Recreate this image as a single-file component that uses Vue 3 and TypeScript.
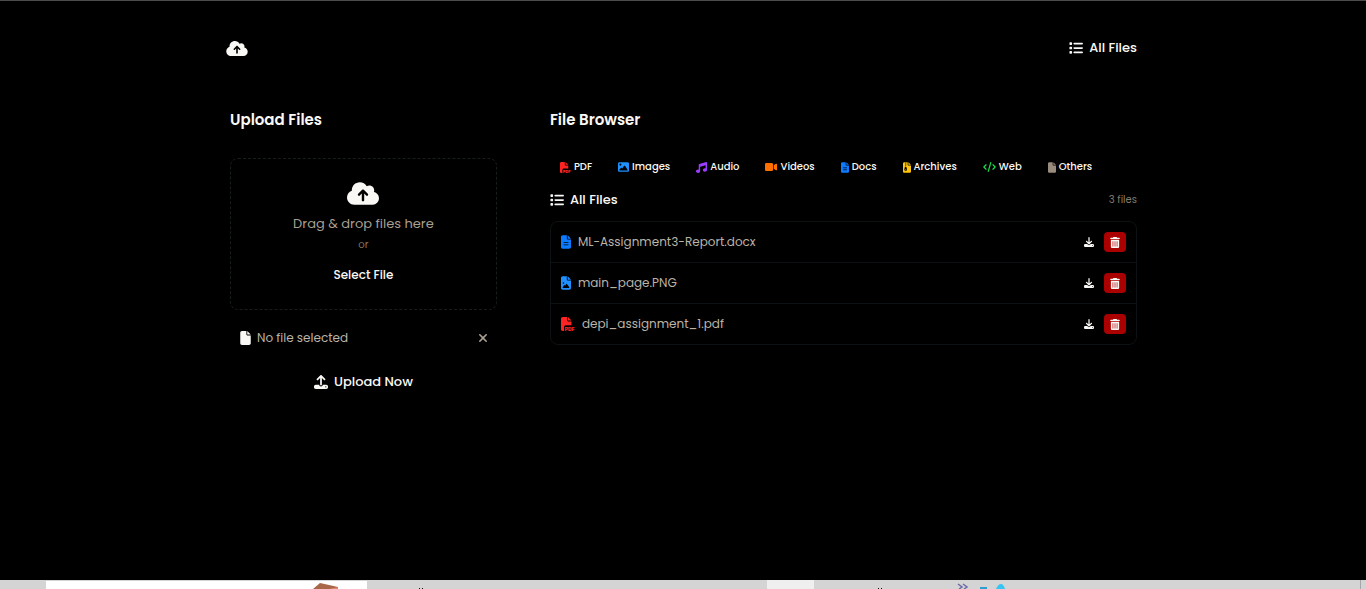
<script setup lang="ts">
import { ref } from 'vue'

type IconName =
  | 'cloud' | 'list' | 'file' | 'doc' | 'picture' | 'pdf' | 'image' | 'music'
  | 'video' | 'zip' | 'code' | 'upload' | 'download' | 'trash' | 'close'

interface Glyph { box: string; d: string; label?: string }

const page = 'M0 64C0 28.7 28.7 0 64 0H224V128c0 17.7 14.3 32 32 32H384V448c0 35.3-28.7 64-64 64H64c-35.3 0-64-28.7-64-64V64zm384 64H256V0L384 128z'

const glyphs: Record<IconName, Glyph> = {
  cloud: { box: '0 32 640 448', d: 'M144 480C64.5 480 0 415.5 0 336c0-62.8 40.2-116.2 96.2-135.9c-.1-2.7-.2-5.4-.2-8.1c0-88.4 71.6-160 160-160c59.3 0 111 32.2 138.7 80.2C409.9 102 428.3 96 448 96c53 0 96 43 96 96c0 12.2-2.3 23.8-6.4 34.6C596 238.4 640 290.1 640 352c0 70.7-57.3 128-128 128H144zm79-217c-9.4 9.4-9.4 24.6 0 33.9s24.6 9.4 33.9 0l39-39V392c0 13.3 10.7 24 24 24s24-10.7 24-24V257.9l39 39c9.4 9.4 24.6 9.4 33.9 0s9.4-24.6 0-33.9l-80-80c-9.4-9.4-24.6-9.4-33.9 0l-80 80z' },
  list: { box: '0 0 512 512', d: 'M40 48C26.7 48 16 58.7 16 72v48c0 13.3 10.7 24 24 24H88c13.3 0 24-10.7 24-24V72c0-13.3-10.7-24-24-24H40zM192 64c-17.7 0-32 14.3-32 32s14.3 32 32 32H480c17.7 0 32-14.3 32-32s-14.3-32-32-32H192zm0 160c-17.7 0-32 14.3-32 32s14.3 32 32 32H480c17.7 0 32-14.3 32-32s-14.3-32-32-32H192zm0 160c-17.7 0-32 14.3-32 32s14.3 32 32 32H480c17.7 0 32-14.3 32-32s-14.3-32-32-32H192zM16 232v48c0 13.3 10.7 24 24 24H88c13.3 0 24-10.7 24-24V232c0-13.3-10.7-24-24-24H40c-13.3 0-24 10.7-24 24zM40 368c-13.3 0-24 10.7-24 24v48c0 13.3 10.7 24 24 24H88c13.3 0 24-10.7 24-24V392c0-13.3-10.7-24-24-24H40z' },
  file: { box: '0 0 384 512', d: page },
  doc: { box: '0 0 384 512', d: page + 'M112 256H272c8.8 0 16 7.2 16 16s-7.2 16-16 16H112c-8.8 0-16-7.2-16-16s7.2-16 16-16zM112 352H272c8.8 0 16 7.2 16 16s-7.2 16-16 16H112c-8.8 0-16-7.2-16-16s7.2-16 16-16z' },
  picture: { box: '0 0 384 512', d: page + 'M64 256a32 32 0 1 1 64 0 32 32 0 1 1-64 0zm152 32c5.3 0 10.2 2.6 13.2 6.9l88 128c3.4 4.9 3.7 11.3 1 16.5s-8.2 8.6-14.2 8.6H80c-5.8 0-11.1-3.1-13.9-8.1s-2.8-11.2.2-16.1l48-80c2.9-4.8 8.1-7.8 13.7-7.8s10.8 2.9 13.7 7.8l12.8 21.4 48.3-70.2c3-4.3 7.9-6.9 13.2-6.9z' },
  pdf: { box: '0 0 512 512', d: 'M0 64C0 28.7 28.7 0 64 0H224V128c0 17.7 14.3 32 32 32H384V304H176c-35.3 0-64 28.7-64 64V512H64c-35.3 0-64-28.7-64-64V64zm384 64H256V0L384 128z', label: 'PDF' },
  image: { box: '0 32 512 448', d: 'M0 96C0 60.7 28.7 32 64 32H448c35.3 0 64 28.7 64 64V416c0 35.3-28.7 64-64 64H64c-35.3 0-64-28.7-64-64V96zM323.8 202.5c-4.5-6.6-11.9-10.5-19.8-10.5s-15.4 3.9-19.8 10.5l-87 127.6L170.7 297c-4.6-5.7-11.5-9-18.7-9s-14.2 3.3-18.7 9l-64 80c-5.8 7.2-6.9 17.1-2.9 25.4s12.4 13.6 21.6 13.6H424c8.9 0 17.1-4.9 21.2-12.8s3.6-17.4-1.4-24.7l-120-176zM112 192a48 48 0 1 0 0-96 48 48 0 1 0 0 96z' },
  music: { box: '0 0 512 512', d: 'M499.1 6.3c8.1 6 12.9 15.6 12.9 25.7v72V368c0 44.2-43 80-96 80s-96-35.8-96-80s43-80 96-80c11.2 0 22 1.6 32 4.6V147L192 223.8V432c0 44.2-43 80-96 80s-96-35.8-96-80s43-80 96-80c11.2 0 22 1.6 32 4.6V200 128c0-14.1 9.3-26.6 22.8-30.7l320-96c9.7-2.9 20.2-1.1 28.3 5z' },
  video: { box: '0 64 576 384', d: 'M0 128C0 92.7 28.7 64 64 64H320c35.3 0 64 28.7 64 64V384c0 35.3-28.7 64-64 64H64c-35.3 0-64-28.7-64-64V128zM559.1 99.8c10.4 5.6 16.9 16.4 16.9 28.2V384c0 11.8-6.5 22.6-16.9 28.2s-23 5-32.9-1.6l-96-64L416 337.1V174.9l14.2-9.5 96-64c9.8-6.5 22.4-7.2 32.9-1.6z' },
  zip: { box: '0 0 384 512', d: page + 'M96 48c0-8.8 7.2-16 16-16h32c8.8 0 16 7.2 16 16s-7.2 16-16 16H112c-8.8 0-16-7.2-16-16zm0 64c0-8.8 7.2-16 16-16h32c8.8 0 16 7.2 16 16s-7.2 16-16 16H112c-8.8 0-16-7.2-16-16zm0 64c0-8.8 7.2-16 16-16h32c8.8 0 16 7.2 16 16s-7.2 16-16 16H112c-8.8 0-16-7.2-16-16zm-6.3 71.8c3.7-14 16.4-23.8 30.9-23.8h14.8c14.5 0 27.2 9.7 30.9 23.8l23.5 88.2c1.4 5.4 2.1 10.9 2.1 16.4c0 35.2-28.8 63.7-64 63.7s-64-28.5-64-63.7c0-5.5 .7-11.1 2.1-16.4l23.5-88.2zM112 336c-8.8 0-16 7.2-16 16s7.2 16 16 16h32c8.8 0 16-7.2 16-16s-7.2-16-16-16H112z' },
  code: { box: '0 0 640 512', d: 'M392.8 1.2c-17-4.9-34.7 5-39.6 22l-128 448c-4.9 17 5 34.7 22 39.6s34.7-5 39.6-22l128-448c4.9-17-5-34.7-22-39.6zm80.6 120.1c-12.5 12.5-12.5 32.8 0 45.3L562.7 256l-89.4 89.4c-12.5 12.5-12.5 32.8 0 45.3s32.8 12.5 45.3 0l112-112c12.5-12.5 12.5-32.8 0-45.3l-112-112c-12.5-12.5-32.8-12.5-45.3 0zm-306.7 0c-12.5-12.5-32.8-12.5-45.3 0l-112 112c-12.5 12.5-12.5 32.8 0 45.3l112 112c12.5 12.5 32.8 12.5 45.3 0s12.5-32.8 0-45.3L77.3 256l89.4-89.4c12.5-12.5 12.5-32.8 0-45.3z' },
  upload: { box: '0 0 512 512', d: 'M288 109.3V352c0 17.7-14.3 32-32 32s-32-14.3-32-32V109.3l-73.4 73.4c-12.5 12.5-32.8 12.5-45.3 0s-12.5-32.8 0-45.3l128-128c12.5-12.5 32.8-12.5 45.3 0l128 128c12.5 12.5 12.5 32.8 0 45.3s-32.8 12.5-45.3 0L288 109.3zM64 352H192c0 35.3 28.7 64 64 64s64-28.7 64-64H448c35.3 0 64 28.7 64 64v32c0 35.3-28.7 64-64 64H64c-35.3 0-64-28.7-64-64V416c0-35.3 28.7-64 64-64zM432 456a24 24 0 1 0 0-48 24 24 0 1 0 0 48z' },
  download: { box: '0 0 512 512', d: 'M288 32c0-17.7-14.3-32-32-32s-32 14.3-32 32V274.7l-73.4-73.4c-12.5-12.5-32.8-12.5-45.3 0s-12.5 32.8 0 45.3l128 128c12.5 12.5 32.8 12.5 45.3 0l128-128c12.5-12.5 12.5-32.8 0-45.3s-32.8-12.5-45.3 0L288 274.7V32zM64 352c-35.3 0-64 28.7-64 64v32c0 35.3 28.7 64 64 64H448c35.3 0 64-28.7 64-64V416c0-35.3-28.7-64-64-64H346.5l-45.3 45.3c-25 25-65.5 25-90.5 0L165.5 352H64zm368 56a24 24 0 1 1 0 48 24 24 0 1 1 0-48z' },
  trash: { box: '0 0 448 512', d: 'M135.2 17.7L128 32H32C14.3 32 0 46.3 0 64S14.3 96 32 96H416c17.7 0 32-14.3 32-32s-14.3-32-32-32H320l-7.2-14.3C307.4 6.8 296.3 0 284.2 0H163.8c-12.1 0-23.2 6.8-28.6 17.7zM416 128H32V448c0 35.3 28.7 64 64 64H352c35.3 0 64-28.7 64-64V128zM144 208V432c0 8.8-7.2 16-16 16s-16-7.2-16-16V208c0-8.8 7.2-16 16-16s16 7.2 16 16zm96 0V432c0 8.8-7.2 16-16 16s-16-7.2-16-16V208c0-8.8 7.2-16 16-16s16 7.2 16 16zm96 0V432c0 8.8-7.2 16-16 16s-16-7.2-16-16V208c0-8.8 7.2-16 16-16s16 7.2 16 16z' },
  close: { box: '32 96 320 320', d: 'M342.6 150.6c12.5-12.5 12.5-32.8 0-45.3s-32.8-12.5-45.3 0L192 210.7 86.6 105.4c-12.5-12.5-32.8-12.5-45.3 0s-12.5 32.8 0 45.3L146.7 256 41.4 361.4c-12.5 12.5-12.5 32.8 0 45.3s32.8 12.5 45.3 0L192 301.3 297.4 406.6c12.5 12.5 32.8 12.5 45.3 0s12.5-32.8 0-45.3L237.3 256 342.6 150.6z' },
}

const categories: { name: string; icon: IconName; tone: string }[] = [
  { name: 'PDF', icon: 'pdf', tone: 'red' },
  { name: 'Images', icon: 'image', tone: 'sky' },
  { name: 'Audio', icon: 'music', tone: 'purple' },
  { name: 'Videos', icon: 'video', tone: 'orange' },
  { name: 'Docs', icon: 'doc', tone: 'blue' },
  { name: 'Archives', icon: 'zip', tone: 'yellow' },
  { name: 'Web', icon: 'code', tone: 'green' },
  { name: 'Others', icon: 'file', tone: 'taupe' },
]

const files = ref<{ name: string; icon: IconName; tone: string }[]>([
  { name: 'ML-Assignment3-Report.docx', icon: 'doc', tone: 'blue' },
  { name: 'main_page.PNG', icon: 'picture', tone: 'sky' },
  { name: 'depi_assignment_1.pdf', icon: 'pdf', tone: 'red' },
])

function remove(index: number) {
  files.value.splice(index, 1)
}
</script>

<template>
  <div class="screen">
    <div class="shell">
      <header class="top">
        <a class="brand" href="#" aria-label="Home">
          <svg class="logo" :viewBox="glyphs.cloud.box" aria-hidden="true"><path :d="glyphs.cloud.d" /></svg>
        </a>
        <a class="all-link" href="#files">
          <svg class="icon-md" :viewBox="glyphs.list.box" aria-hidden="true"><path :d="glyphs.list.d" /></svg>
          <span>All Files</span>
        </a>
      </header>

      <main class="columns">
        <section class="upload">
          <h2>Upload Files</h2>
          <div class="dropzone">
            <svg class="drop-cloud" :viewBox="glyphs.cloud.box" aria-hidden="true"><path :d="glyphs.cloud.d" /></svg>
            <p class="drop-text">Drag &amp; drop files here</p>
            <p class="or">or</p>
            <button class="select" type="button">Select File</button>
          </div>
          <div class="chosen">
            <svg class="icon-file" :viewBox="glyphs.file.box" aria-hidden="true"><path :d="glyphs.file.d" /></svg>
            <span class="chosen-name">No file selected</span>
            <button class="clear" type="button" aria-label="Clear selection">
              <svg :viewBox="glyphs.close.box" aria-hidden="true"><path :d="glyphs.close.d" /></svg>
            </button>
          </div>
          <button class="submit" type="button">
            <svg class="icon-md" :viewBox="glyphs.upload.box" aria-hidden="true"><path :d="glyphs.upload.d" fill-rule="evenodd" /></svg>
            <span>Upload Now</span>
          </button>
        </section>

        <section id="files" class="browser">
          <h2>File Browser</h2>
          <nav class="tabs">
            <button v-for="c in categories" :key="c.name" class="tab" type="button">
              <svg :class="['tab-icon', c.icon, c.tone]" :viewBox="glyphs[c.icon].box" aria-hidden="true">
                <path :d="glyphs[c.icon].d" fill-rule="evenodd" />
                <text v-if="glyphs[c.icon].label" class="tag" x="140" y="510">{{ glyphs[c.icon].label }}</text>
              </svg>
              <span>{{ c.name }}</span>
            </button>
          </nav>
          <div class="list-head">
            <h3>
              <svg class="icon-md" :viewBox="glyphs.list.box" aria-hidden="true"><path :d="glyphs.list.d" /></svg>
              <span>All Files</span>
            </h3>
            <span class="count">{{ files.length }} files</span>
          </div>
          <ul class="files">
            <li v-for="(f, i) in files" :key="f.name">
              <svg :class="['row-icon', f.icon, f.tone]" :viewBox="glyphs[f.icon].box" aria-hidden="true">
                <path :d="glyphs[f.icon].d" fill-rule="evenodd" />
                <text v-if="glyphs[f.icon].label" class="tag" x="140" y="510">{{ glyphs[f.icon].label }}</text>
              </svg>
              <span class="file-name">{{ f.name }}</span>
              <button class="action" type="button" :aria-label="'Download ' + f.name">
                <svg class="download" :viewBox="glyphs.download.box" aria-hidden="true"><path :d="glyphs.download.d" fill-rule="evenodd" /></svg>
              </button>
              <button class="action danger" type="button" :aria-label="'Delete ' + f.name" @click="remove(i)">
                <svg class="trash" :viewBox="glyphs.trash.box" aria-hidden="true"><path :d="glyphs.trash.d" fill-rule="evenodd" /></svg>
              </button>
            </li>
          </ul>
        </section>
      </main>
    </div>

    <svg class="taskbar" viewBox="0 0 1366 9" preserveAspectRatio="none" aria-hidden="true">
      <rect width="1366" height="9" fill="#d4d4d4" />
      <rect x="46" y="1" width="321" height="8" fill="#fff" />
      <path d="M313 9L320 3L338 7V9Z" fill="#a9674a" />
      <path d="M329 9L338 7V9Z" fill="#d98a63" />
      <path d="M419 8h1v1h-1zM422 8h1v1h-1zM878 8h1v1h-1zM881 8h1v1h-1z" fill="#111" />
      <rect x="767" width="47" height="9" fill="#efefef" />
      <path d="M958 4l4 3-3 2M963 4l4 3-3 2" fill="none" stroke="#6c6ca8" stroke-width="1.5" />
      <path d="M980 7h7v2h-7z" fill="#2f9fd0" />
      <path d="M996 9C997 6 999 4 1001 4S1004 6 1005 9Z" fill="#35c5f4" />
      <path d="M1360 0h1v9h-1z" fill="#a6a6a6" />
    </svg>
  </div>
</template>

<style>
body {
  margin: 0;
  background: #000;
}
</style>

<style scoped>
.screen {
  box-sizing: border-box;
  min-height: 100vh;
  display: flex;
  flex-direction: column;
  border-top: 1px solid #4c4c4c;
  background: #000;
  color: #faf8f5;
  font-family: Poppins, Inter, "Open Sans", sans-serif;
  font-size: 13px;
  line-height: 22px;
}

.shell {
  box-sizing: border-box;
  width: 100%;
  max-width: 914px;
  margin: 0 auto;
  flex: 1;
}

h2, h3, p, ul {
  margin: 0;
  padding: 0;
}

svg {
  display: block;
  flex: none;
  fill: currentColor;
}

button {
  margin: 0;
  padding: 0;
  border: 0;
  background: none;
  color: inherit;
  font: inherit;
  cursor: pointer;
}

a {
  color: inherit;
  text-decoration: none;
}

.top {
  display: flex;
  align-items: center;
  justify-content: space-between;
  padding: 36px 3px 0 0;
}

.logo {
  width: 22px;
  height: 15px;
}

.all-link, .submit, h3 {
  display: flex;
  align-items: center;
  gap: 6px;
  font-weight: 500;
}

.icon-md {
  width: 14px;
  height: 14px;
}

.columns {
  display: grid;
  grid-template-columns: 5fr 11fr;
  gap: 53px;
  padding: 49px 3px 0 4px;
}

h2 {
  font-size: 15px;
  line-height: 24px;
  font-weight: 600;
}

.upload {
  display: flex;
  flex-direction: column;
}

.dropzone {
  display: flex;
  flex-direction: column;
  align-items: center;
  margin-top: 26px;
  padding: 23px 16px;
  border: 1px dashed #171c1d;
  border-radius: 8px;
}

.drop-cloud {
  width: 32px;
  height: 23px;
}

.drop-text {
  margin-top: 8px;
  color: #a89f91;
}

.or {
  margin-top: 2px;
  color: #857660;
  font-size: 10px;
  line-height: 16px;
}

.select {
  margin-top: 11px;
  font-size: 12px;
  font-weight: 500;
}

.chosen {
  display: flex;
  align-items: center;
  gap: 6px;
  margin-top: 17px;
  padding: 0 10px;
  color: #bbb3a8;
  font-size: 12px;
}

.icon-file {
  width: 11px;
  height: 14px;
  color: #faf8f5;
}

.chosen-name {
  flex: 1;
}

.clear {
  color: #a89f91;
}

.clear svg {
  width: 8px;
  height: 8px;
}

.submit {
  align-self: center;
  margin-top: 22px;
}

.tabs {
  display: flex;
  gap: 6px;
  margin-top: 25px;
}

.tab {
  display: flex;
  align-items: center;
  gap: 3px;
  padding: 0 10px;
  font-size: 10px;
  line-height: 20px;
  font-weight: 500;
}

.tab-icon {
  width: 11px;
  height: 11px;
}

.tab-icon.image {
  height: 10px;
}

.tab-icon.video {
  width: 12px;
  height: 8px;
}

.tab-icon.code {
  width: 13px;
  height: 10px;
}

.tab-icon.doc, .tab-icon.zip, .tab-icon.file {
  width: 8px;
}

.tag {
  font: 900 180px Inter, sans-serif;
}

.list-head {
  display: flex;
  align-items: center;
  justify-content: space-between;
  margin-top: 12px;
}

h3 {
  font-size: 13px;
}

.count {
  color: #857b6d;
  font-size: 10px;
}

.files {
  margin-top: 10px;
  border: 1px solid #0c1214;
  border-radius: 8px;
  list-style: none;
}

.files li {
  display: flex;
  align-items: center;
  gap: 7px;
  height: 40px;
  padding: 0 10px;
}

.files li + li {
  border-top: 1px solid #0c1214;
}

.row-icon {
  width: 10px;
  height: 14px;
}

.row-icon.pdf {
  width: 14px;
}

.file-name {
  flex: 1;
  color: #bbb3a8;
  font-size: 12px;
}

.action {
  display: flex;
  align-items: center;
  justify-content: center;
  width: 22px;
  height: 20px;
  border-radius: 4px;
}

.danger {
  margin-left: -3px;
  background: #ab0000;
}

.download {
  width: 10px;
  height: 10px;
}

.trash {
  width: 10px;
  height: 11px;
}

.red { color: #ff2323; }
.sky { color: #1e90ff; }
.purple { color: #9b3cff; }
.orange { color: #ff6f00; }
.blue { color: #0d7bff; }
.yellow { color: #ffc40c; }
.green { color: #18dc4b; }
.taupe { color: #9a8c7c; }

.taskbar {
  width: 100%;
  height: 9px;
}
</style>
